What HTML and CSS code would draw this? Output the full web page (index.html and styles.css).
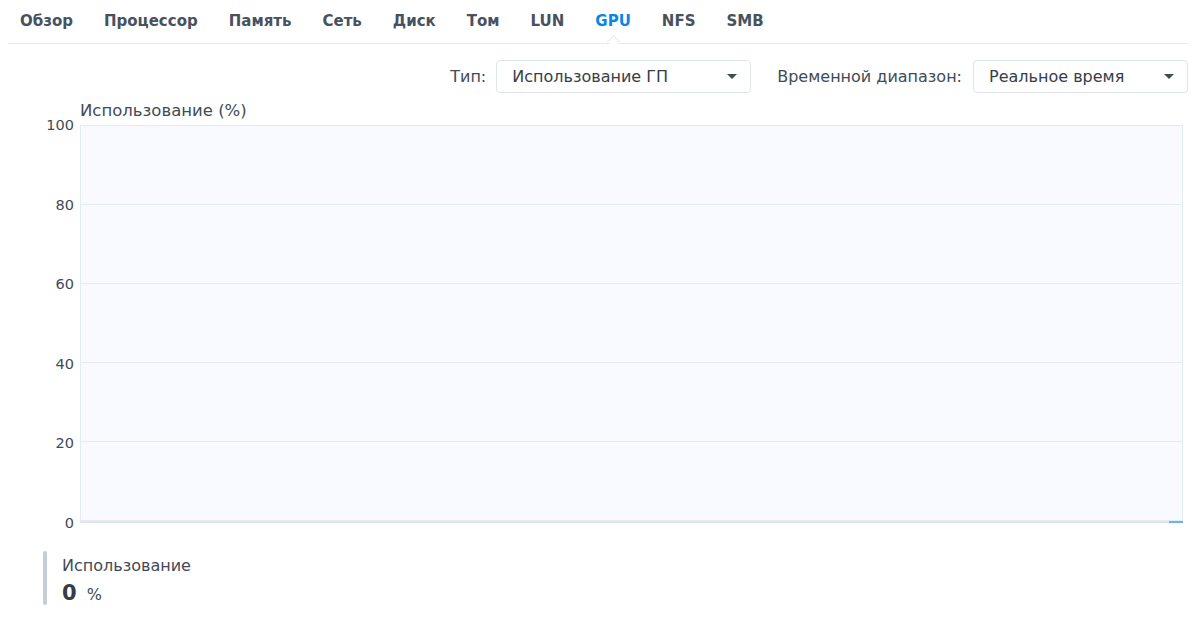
FILE: index.html
```html
<!DOCTYPE html>
<html lang="ru">
<head>
<meta charset="utf-8">
<link rel="stylesheet" href="styles.css">
</head>
<body>
<div class="page">
  <nav class="tabs">
    <span class="tab">Обзор</span>
    <span class="tab">Процессор</span>
    <span class="tab">Память</span>
    <span class="tab">Сеть</span>
    <span class="tab">Диск</span>
    <span class="tab">Том</span>
    <span class="tab">LUN</span>
    <span class="tab active">GPU</span>
    <span class="tab">NFS</span>
    <span class="tab">SMB</span>
  </nav>
  <div class="toolbar">
    <label class="field-label">Тип:</label>
    <div class="select select-type"><span>Использование ГП</span><i class="arrow"></i></div>
    <label class="field-label range-label">Временной диапазон:</label>
    <div class="select select-range"><span>Реальное время</span><i class="arrow"></i></div>
  </div>
  <div class="chart">
    <div class="axis">
      <span>100</span><span>80</span><span>60</span><span>40</span><span>20</span><span>0</span>
    </div>
    <div class="plot-wrap">
      <div class="chart-title">Использование (%)</div>
      <div class="plot">
        <div class="band"></div><div class="band"></div><div class="band"></div><div class="band"></div><div class="band"></div>
        <div class="series-tick"></div>
      </div>
    </div>
  </div>
  <div class="legend">
    <div class="legend-bar"></div>
    <div class="legend-body">
      <div class="legend-name">Использование</div>
      <div class="legend-value"><b>0</b><span>%</span></div>
    </div>
  </div>
</div>
</body>
</html>
```
FILE: styles.css
```css
html, body { margin: 0; padding: 0; background: #fff; }
body { font-family: "DejaVu Sans", Verdana, sans-serif; color: #414b55; }
.page { width: 1200px; height: 638px; box-sizing: border-box; padding: 0 12px 0 8px; }

.tabs {
  display: flex; gap: 31px; height: 44px; align-items: center;
  padding-left: 12px; border-bottom: 1px solid #e3e9ef; box-sizing: border-box;
  font-weight: bold; font-size: 15px; color: #47525e;
}
.tab { position: relative; line-height: 20px; padding-bottom: 2px; }
.tab.active { color: #0a86e5; }
.tab.active::after {
  content: ""; position: absolute; left: 50%; bottom: -13px; width: 8px; height: 8px;
  margin-left: -4px; background: #fff; border-left: 1px solid #e3e9ef; border-top: 1px solid #e3e9ef;
  transform: rotate(45deg);
}

.toolbar {
  display: flex; justify-content: flex-end; align-items: center;
  margin-top: 16px; height: 33px; font-size: 16px;
}
.field-label { margin-right: 10px; color: #414b55; }
.range-label { margin-left: 26px; margin-right: 11px; }
.select {
  height: 33px; box-sizing: border-box; border: 1px solid #dfe5eb; border-radius: 4px;
  display: flex; align-items: center; justify-content: space-between;
  padding: 0 13px 0 15px; color: #353e48;
}
.select-type { width: 255px; }
.select-range { width: 215px; }
.arrow {
  width: 0; height: 0; border-left: 5px solid transparent; border-right: 5px solid transparent;
  border-top: 5px solid #414b55;
}

.chart { display: flex; }
.axis {
  width: 66px; display: flex; flex-direction: column; justify-content: space-between;
  align-items: flex-end; margin-top: 24px; height: 414px; font-size: 14.5px; color: #414b55;
}
.axis span { line-height: 16px; height: 16px; }
.plot-wrap { flex: 1; margin-left: 6px; }
.chart-title { font-size: 16.5px; line-height: 20px; height: 32px; padding-top: 8px; box-sizing: border-box; color: #414b55; }
.plot {
  position: relative; height: 398px; width: 1103px; box-sizing: border-box;
  background: #f8faff; border: 1px solid #e4ebf1; border-bottom: 2px solid #dde6ec;
  display: flex; flex-direction: column;
}
.band { flex: 1; border-bottom: 1px solid #e5ebf2; }
.band:last-of-type { border-bottom: none; }
.series-tick { position: absolute; right: -1px; bottom: -2px; width: 14px; height: 2px; background: #69b3f3; }

.legend { display: flex; margin-top: 20px; margin-left: 35px; }
.legend-bar { width: 4px; height: 54px; border-radius: 2px; background: #c5ced6; }
.legend-body { margin-left: 15px; padding-top: 5px; }
.legend-name { font-size: 16px; line-height: 20px; color: #414b55; }
.legend-value { margin-top: 4px; line-height: 26px; }
.legend-value b { font-size: 21px; color: #353e48; }
.legend-value span { font-size: 16px; margin-left: 10px; color: #414b55; }
```
